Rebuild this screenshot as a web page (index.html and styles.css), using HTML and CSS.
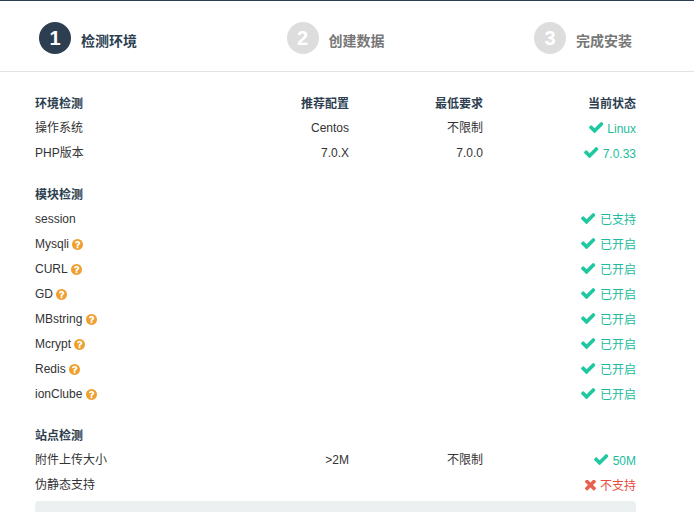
FILE: index.html
```html
<!DOCTYPE html>
<html lang="zh-CN">
<head>
<meta charset="utf-8">
<title>安装</title>
<link rel="stylesheet" href="styles.css">
</head>
<body>
<svg class="defs" width="0" height="0" aria-hidden="true">
  <symbol id="ok" viewBox="121 334 1550 1188"><path d="M1671 566q0 40-28 68l-724 724-136 136q-28 28-68 28t-68-28l-136-136-362-362q-28-28-28-68t28-68l136-136q28-28 68-28t68 28l294 295 656-657q28-28 68-28t68 28l136 136q28 28 28 68z"/></symbol>
  <symbol id="no" viewBox="114 114 1184 1184"><path d="M1298 1014q0 40-28 68l-136 136q-28 28-68 28t-68-28l-294-294-294 294q-28 28-68 28t-68-28l-136-136q-28-28-28-68t28-68l294-294-294-294q-28-28-28-68t28-68l136-136q28-28 68-28t68 28l294 294 294-294q28-28 68-28t68 28l136 136q28 28 28 68t-28 68l-294 294 294 294q28 28 28 68z"/></symbol>
  <symbol id="help" viewBox="128 128 1536 1536"><path d="M1024 1376v-192q0-14-9-23t-23-9h-192q-14 0-23 9t-9 23v192q0 14 9 23t23 9h192q14 0 23-9t9-23zm256-672q0-88-55.500-163t-138.500-116-170-41q-243 0-371 213-15 24 8 42l132 100q7 6 19 6 16 0 25-12 53-68 86-92 34-24 86-24 48 0 85.500 26t37.500 59q0 38-20 61t-68 45q-63 28-115.500 86.500t-52.500 125.500v36q0 14 9 23t23 9h192q14 0 23-9t9-23q0-19 21.500-49.500t54.500-49.500q32-18 49-28.500t46-35 44.500-48 28-60.500 12.500-81zm384 192q0 209-103 385.500t-279.500 279.500-385.500 103-385.500-103-279.500-279.500-103-385.500 103-385.500 279.500-279.500 385.500-103 385.500 103 279.500 279.500 103 385.500z"/></symbol>
</svg>

<header class="steps">
  <div class="step step-active"><span class="step-num">1</span><span class="step-label">检测环境</span></div>
  <div class="step"><span class="step-num">2</span><span class="step-label">创建数据</span></div>
  <div class="step step-last"><span class="step-num">3</span><span class="step-label">完成安装</span></div>
</header>

<main class="content">
  <section class="group">
    <div class="row row-head"><span>环境检测</span><span class="num">推荐配置</span><span class="num">最低要求</span><span class="num">当前状态</span></div>
    <div class="row"><span>操作系统</span><span class="num">Centos</span><span class="num">不限制</span><span class="state"><svg class="i-ok"><use href="#ok"/></svg>Linux</span></div>
    <div class="row"><span>PHP版本</span><span class="num">7.0.X</span><span class="num">7.0.0</span><span class="state"><svg class="i-ok"><use href="#ok"/></svg>7.0.33</span></div>
  </section>

  <section class="group">
    <div class="row row-head"><span>模块检测</span></div>
    <div class="row"><span>session</span><span class="num"></span><span class="num"></span><span class="state"><svg class="i-ok"><use href="#ok"/></svg>已支持</span></div>
    <div class="row"><span>Mysqli <svg class="i-help"><use href="#help"/></svg></span><span class="num"></span><span class="num"></span><span class="state"><svg class="i-ok"><use href="#ok"/></svg>已开启</span></div>
    <div class="row"><span>CURL <svg class="i-help"><use href="#help"/></svg></span><span class="num"></span><span class="num"></span><span class="state"><svg class="i-ok"><use href="#ok"/></svg>已开启</span></div>
    <div class="row"><span>GD <svg class="i-help"><use href="#help"/></svg></span><span class="num"></span><span class="num"></span><span class="state"><svg class="i-ok"><use href="#ok"/></svg>已开启</span></div>
    <div class="row"><span>MBstring <svg class="i-help"><use href="#help"/></svg></span><span class="num"></span><span class="num"></span><span class="state"><svg class="i-ok"><use href="#ok"/></svg>已开启</span></div>
    <div class="row"><span>Mcrypt <svg class="i-help"><use href="#help"/></svg></span><span class="num"></span><span class="num"></span><span class="state"><svg class="i-ok"><use href="#ok"/></svg>已开启</span></div>
    <div class="row"><span>Redis <svg class="i-help"><use href="#help"/></svg></span><span class="num"></span><span class="num"></span><span class="state"><svg class="i-ok"><use href="#ok"/></svg>已开启</span></div>
    <div class="row"><span>ionClube <svg class="i-help"><use href="#help"/></svg></span><span class="num"></span><span class="num"></span><span class="state"><svg class="i-ok"><use href="#ok"/></svg>已开启</span></div>
  </section>

  <section class="group group-last">
    <div class="row row-head"><span>站点检测</span></div>
    <div class="row"><span>附件上传大小</span><span class="num">&gt;2M</span><span class="num">不限制</span><span class="state"><svg class="i-ok"><use href="#ok"/></svg>50M</span></div>
    <div class="row"><span>伪静态支持</span><span class="num"></span><span class="num"></span><span class="state state-bad"><svg class="i-no"><use href="#no"/></svg>不支持</span></div>
  </section>

  <div class="notice"></div>
</main>
</body>
</html>
```

FILE: styles.css
```css
html, body {
  margin: 0;
  padding: 0;
  background: #fff;
}

body {
  height: 512px;
  border-top: 1px solid #2c3e50;
  box-sizing: border-box;
  font-family: "Liberation Sans", "Noto Sans CJK SC", sans-serif;
  font-size: 12px;
  color: #333;
}

.defs {
  position: absolute;
}

.steps {
  display: flex;
  height: 71px;
  padding-left: 39px;
  padding-top: 21px;
  box-sizing: border-box;
  border-bottom: 1px solid #e2e2e2;
}

.step {
  flex: 0 0 247.5px;
  display: flex;
  align-items: flex-start;
}

.step-last {
  flex: 1 1 auto;
}

.step-num {
  width: 32px;
  height: 32px;
  border-radius: 50%;
  background: #dddddd;
  color: #fff;
  font-size: 20px;
  font-weight: 700;
  line-height: 32px;
  text-align: center;
}

.step-label {
  margin-left: 10px;
  margin-top: 9px;
  line-height: 20px;
  font-size: 14px;
  font-weight: 700;
  color: #777;
}

.step-active .step-num {
  background: #2c3e50;
}

.step-active .step-label {
  color: #2c3e50;
}

.content {
  padding: 20px 58px 0 35px;
}

.group {
  margin-bottom: 17px;
}

.group-last {
  margin-bottom: 3px;
}

.row {
  display: grid;
  grid-template-columns: 240px 74px 134px 153px;
  height: 25px;
  line-height: 25px;
  white-space: nowrap;
}

.row-head {
  height: 24px;
  font-weight: 700;
  color: #2c3e50;
}

.num {
  text-align: right;
}

.state {
  text-align: right;
  color: #1abc9c;
  position: relative;
  top: 1px;
}

.state-bad {
  color: #e74c3c;
}

.i-ok {
  width: 14.5px;
  height: 11px;
  margin-right: 4px;
  fill: #1fc8a0;
  vertical-align: 0;
}

.i-no {
  width: 11px;
  height: 11px;
  margin-right: 4px;
  fill: #e8604f;
  vertical-align: -1px;
}

.i-help {
  width: 11px;
  height: 11px;
  fill: #f0a030;
  vertical-align: -1.5px;
}

.notice {
  height: 11px;
  border-radius: 4px 4px 0 0;
  background: #ecf0f1;
}
```
